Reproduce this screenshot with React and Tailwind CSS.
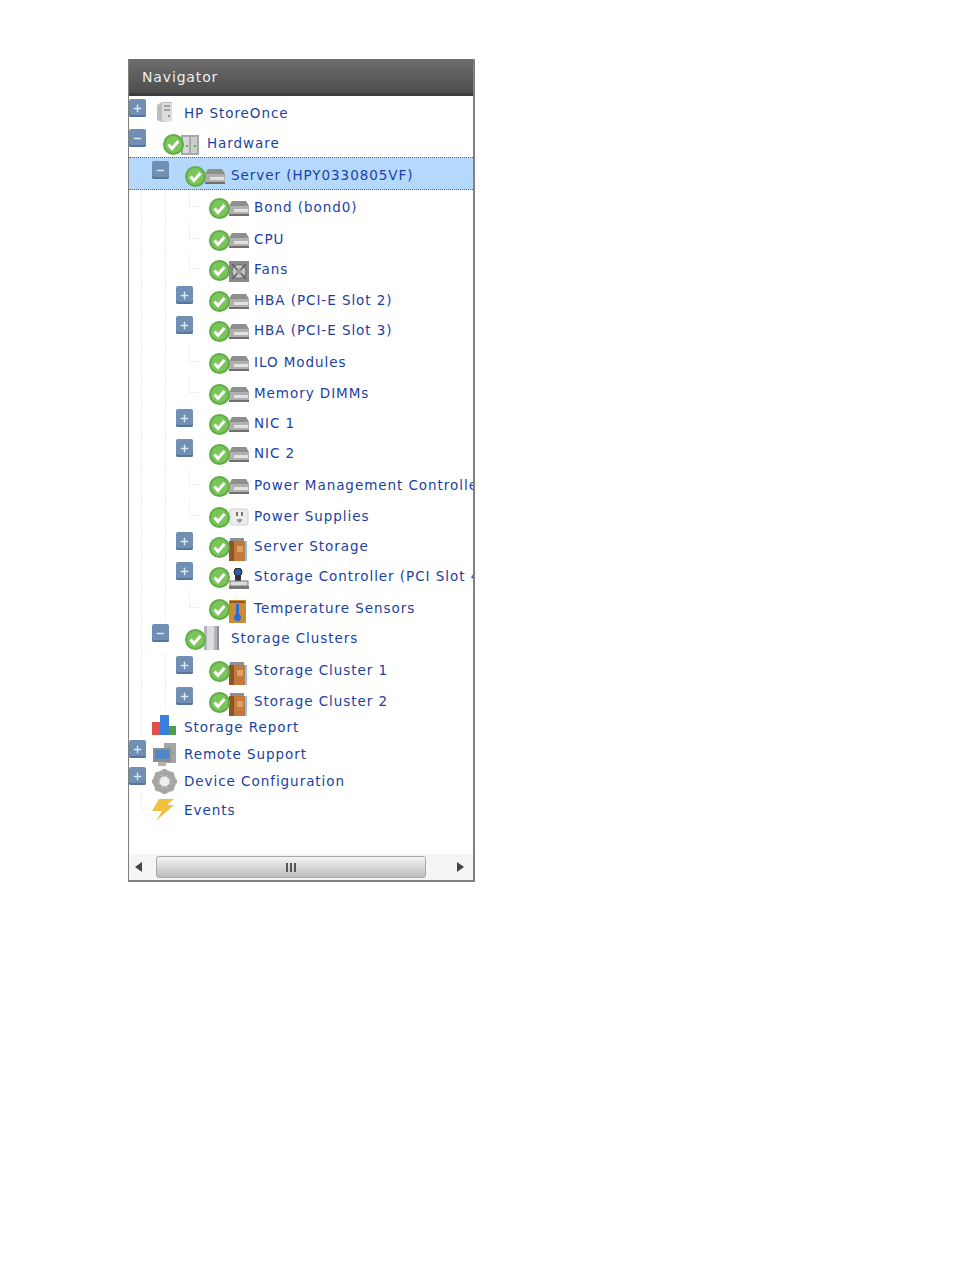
import React from 'react';
import { Plus, Minus } from 'lucide-react';

const Check = () => (
    <svg width="21" height="21" viewBox="0 0 21 21" className="relative z-10 shrink-0">
        <circle cx="10.5" cy="10.5" r="9.5" fill="#7cc45c" stroke="#5fae45" strokeWidth="2" />
        <path d="M5.5 10.5 L9 14.5 L15.5 7" fill="none" stroke="#ffffff" strokeWidth="3" />
    </svg>
);

const Disk = () => (
    <svg width="20" height="18" viewBox="0 0 20 18">
        <path d="M3 2 H17 L20 7 H0 Z" fill="#8f8f8f" />
        <rect x="0" y="7" width="20" height="9" fill="#b0b0b0" />
        <rect x="5" y="10" width="14" height="3" fill="#e2e2e2" />
        <rect x="0" y="15" width="20" height="2" fill="#6f6f6f" />
    </svg>
);

const Rack = () => (
    <svg width="20" height="20" viewBox="0 0 20 20" className="-ml-[3px]">
        <rect x="1" y="0" width="18" height="20" fill="#a8a8a8" />
        <rect x="3" y="2" width="6" height="16" fill="#d6d6d6" />
        <rect x="11" y="2" width="6" height="16" fill="#cccccc" />
        <rect x="6" y="10" width="2" height="2" fill="#5fb25a" />
        <rect x="14" y="10" width="2" height="2" fill="#5fb25a" />
    </svg>
);

const Tower = () => (
    <svg width="18" height="22" viewBox="0 0 18 22" className="ml-[2px]">
        <path d="M1 4 L6 1 H16 V20 L6 21 L1 19 Z" fill="#bdbdbd" />
        <path d="M6 2 H16 V20 H6 Z" fill="#dcdcdc" />
        <rect x="8" y="4" width="6" height="2" fill="#a0a0a0" />
        <rect x="8" y="8" width="6" height="2" fill="#a0a0a0" />
        <rect x="12" y="14" width="2" height="2" fill="#5fb25a" />
    </svg>
);

const Fan = () => (
    <svg width="20" height="22" viewBox="0 0 20 22">
        <rect x="0" y="0" width="20" height="21" fill="#8a8a8a" />
        <circle cx="10" cy="10.5" r="7" fill="#c4c4c4" stroke="#6a6a6a" />
        <path d="M3 3 L17 18 M17 3 L3 18" stroke="#5f5f5f" strokeWidth="1.5" />
        <circle cx="10" cy="10.5" r="2.5" fill="#9a9a9a" />
    </svg>
);

const Plug = () => (
    <svg width="20" height="18" viewBox="0 0 20 18">
        <rect x="1" y="1" width="18" height="16" rx="2" fill="#ececec" stroke="#cfcfcf" />
        <rect x="7" y="4" width="2" height="4" fill="#777777" />
        <rect x="12" y="4" width="2" height="4" fill="#777777" />
        <path d="M8 11 H13 V13 L10.500 15 L8 13 Z" fill="#9a9a9a" />
    </svg>
);

const Book = () => (
    <svg width="21" height="24" viewBox="0 0 21 24" className="-ml-[3px]">
        <rect x="4" y="0" width="14" height="4" fill="#8f8f8f" />
        <rect x="3" y="3" width="16" height="20" fill="#c2793a" />
        <rect x="3" y="3" width="5" height="20" fill="#8f5426" />
        <rect x="11" y="8" width="6" height="6" fill="#dba26a" />
        <rect x="19" y="3" width="2" height="20" fill="#8fc0ee" />
    </svg>
);

const Stamp = () => (
    <svg width="20" height="24" viewBox="0 0 20 24">
        <circle cx="9" cy="4" r="4" fill="#2f5f9f" stroke="#222222" />
        <rect x="6" y="7" width="6" height="7" fill="#333333" />
        <rect x="1" y="13" width="18" height="5" fill="#dcdcdc" stroke="#777777" />
        <rect x="0" y="18" width="20" height="3" fill="#777777" />
    </svg>
);

const Thermo = () => (
    <svg width="18" height="23" viewBox="0 0 18 23">
        <rect x="0" y="0" width="17" height="23" fill="#d08a30" />
        <rect x="1" y="1" width="15" height="2" fill="#8f5a1e" />
        <rect x="7" y="4" width="3" height="12" fill="#2a6fd0" />
        <circle cx="8.500" cy="17.500" r="3.500" fill="#2a6fd0" />
    </svg>
);

const Cylinder = () => (
    <svg width="18" height="25" viewBox="0 0 18 25" className="-ml-[2px] -mt-[4px]">
        <rect x="1" y="0" width="15" height="24" fill="#b4b4bc" />
        <rect x="4" y="0" width="7" height="24" fill="#dcdce2" />
        <rect x="14" y="0" width="2" height="24" fill="#8d8d95" />
    </svg>
);

const Bars = () => (
    <svg width="25" height="21" viewBox="0 0 25 21" className="-ml-[2px]">
        <rect x="0" y="7" width="8" height="13" fill="#e0504a" />
        <rect x="8" y="0" width="9" height="20" fill="#3a7fe0" />
        <rect x="17" y="11" width="7" height="9" fill="#4f9e4a" />
    </svg>
);

const Monitor = () => (
    <svg width="25" height="25" viewBox="0 0 25 25" className="-ml-[2px]">
        <rect x="12" y="1" width="12" height="20" fill="#a4a4a4" />
        <rect x="20" y="10" width="2" height="2" fill="#5fb25a" />
        <rect x="1" y="6" width="18" height="14" fill="#8e8e8e" />
        <rect x="3" y="8" width="14" height="9" fill="#4f86c6" />
        <rect x="6" y="20" width="8" height="4" fill="#b4b4b4" />
    </svg>
);

const Gear = () => (
    <svg width="25" height="25" viewBox="0 0 25 25" className="-ml-[2px]">
        <circle cx="12.500" cy="12.500" r="9" fill="none" stroke="#a6a6a6" strokeWidth="5" />
        <path d="M12.500 0 V25 M0 12.500 H25 M3.700 3.700 L21.300 21.300 M21.300 3.700 L3.700 21.300" stroke="#a6a6a6" strokeWidth="4" />
        <circle cx="12.500" cy="12.500" r="5" fill="#eeeeee" />
    </svg>
);

const Bolt = () => (
    <svg width="24" height="24" viewBox="0 0 24 24" className="-ml-[3px]">
        <path d="M8 1 H23 L16 7 H23 L5 23 L11 13 H1 Z" fill="#f0c040" />
    </svg>
);

const rows = [
    { label: 'HP StoreOnce', h: 'h-[30px]', level: 0, open: false, icon: <Tower />, plain: true },
    { label: 'Hardware', h: 'h-[32px]', level: 1, open: true, icon: <Rack />, status: true },
    { label: 'Server (HPY0330805VF)', h: 'h-[32px]', level: 2, open: true, icon: <Disk />, status: true, selected: true },
    { label: 'Bond (bond0)', h: 'h-[32px]', level: 3, icon: <Disk />, status: true, lines: 3 },
    { label: 'CPU', h: 'h-[30px]', level: 3, icon: <Disk />, status: true, lines: 3 },
    { label: 'Fans', h: 'h-[31px]', level: 3, icon: <Fan />, status: true, lines: 3 },
    { label: 'HBA (PCI-E Slot 2)', h: 'h-[30px]', level: 3, open: false, icon: <Disk />, status: true, lines: 2 },
    { label: 'HBA (PCI-E Slot 3)', h: 'h-[32px]', level: 3, open: false, icon: <Disk />, status: true, lines: 2 },
    { label: 'ILO Modules', h: 'h-[31px]', level: 3, icon: <Disk />, status: true, lines: 3 },
    { label: 'Memory DIMMs', h: 'h-[30px]', level: 3, icon: <Disk />, status: true, lines: 3 },
    { label: 'NIC 1', h: 'h-[30px]', level: 3, open: false, icon: <Disk />, status: true, lines: 2 },
    { label: 'NIC 2', h: 'h-[32px]', level: 3, open: false, icon: <Disk />, status: true, lines: 2 },
    { label: 'Power Management Controller', h: 'h-[31px]', level: 3, icon: <Disk />, status: true, lines: 3 },
    { label: 'Power Supplies', h: 'h-[30px]', level: 3, icon: <Plug />, status: true, lines: 3 },
    { label: 'Server Storage', h: 'h-[30px]', level: 3, open: false, icon: <Book />, status: true, lines: 2 },
    { label: 'Storage Controller (PCI Slot 4)', h: 'h-[32px]', level: 3, open: false, icon: <Stamp />, status: true, lines: 2 },
    { label: 'Temperature Sensors', h: 'h-[30px]', level: 3, icon: <Thermo />, status: true, lines: 3 },
    { label: 'Storage Clusters', h: 'h-[32px]', level: 2, open: true, icon: <Cylinder />, status: true, lines: 1 },
    { label: 'Storage Cluster 1', h: 'h-[31px]', level: 3, open: false, icon: <Book />, status: true, lines: 2 },
    { label: 'Storage Cluster 2', h: 'h-[26px]', level: 3, open: false, icon: <Book />, status: true, lines: 2 },
    { label: 'Storage Report', h: 'h-[27px]', level: 0, icon: <Bars />, plain: true, lines: 1 },
    { label: 'Remote Support', h: 'h-[27px]', level: 0, open: false, icon: <Monitor />, plain: true },
    { label: 'Device Configuration', h: 'h-[29px]', level: 0, open: false, icon: <Gear />, plain: true },
    { label: 'Events', h: 'h-[30px]', level: 0, icon: <Bolt />, plain: true, last: true },
];

const indent = ['pl-0', 'pl-0', 'pl-[23px]', 'pl-[47px]'];
const slot = ['w-[25px]', 'w-[34px]', 'w-[33px]', 'w-[33px]'];
const iconBox = ['w-[30px]', 'w-[44px]', 'w-[46px]', 'w-[45px]'];

function Expander({ open }) {
    const Glyph = open ? Minus : Plus;
    return (
        <div className="mt-[3px] flex h-[18px] w-[17px] items-center justify-center rounded-[2px] bg-[#6f90b4] shadow-[inset_0_-2px_0_#55769a]">
            <Glyph size={11} strokeWidth={3} className="text-[#dfe8f2]" />
        </div>
    );
}

function Guides({ lines, last }) {
    return (
        <>
            {lines >= 1 && <div className="absolute left-[12px] top-0 h-full border-l border-dotted border-[#e6e6e6]"></div>}
            {lines >= 2 && <div className="absolute left-[36px] top-0 h-full border-l border-dotted border-[#e6e6e6]"></div>}
            {lines >= 3 && <div className="absolute left-[60px] top-0 h-[17px] w-[10px] border-b border-l border-dotted border-[#e6e6e6]"></div>}
            {last && <div className="absolute left-[12px] top-0 h-[17px] w-[9px] border-b border-l border-dotted border-[#e6e6e6]"></div>}
        </>
    );
}

function Row({ row }) {
    const rowClass = row.selected
        ? '-mt-px h-[33px] border-y border-dotted border-[#3f6fa8] bg-[#b5d8fd]'
        : row.h;
    return (
        <div className={`relative flex items-start ${rowClass} ${indent[row.level]}`}>
            <Guides lines={row.lines} last={row.last} />
            <div className={`shrink-0 ${slot[row.level]}`}>
                {row.open !== undefined && <Expander open={row.open} />}
            </div>
            <div className={`flex shrink-0 items-start ${iconBox[row.level]} ${row.plain ? 'mt-[5px]' : 'mt-2'}`}>
                {row.status && <Check />}
                <div className={row.status ? '-ml-px mt-px' : ''}>{row.icon}</div>
            </div>
            <span className="whitespace-nowrap text-[13.500px] leading-[34px] tracking-[0.95px] text-[#1c3fa3]">{row.label}</span>
        </div>
    );
}

export default function App() {
    return (
        <div className="min-h-[1270px] bg-white pl-[128px] pt-[59px] font-['DejaVu_Sans',sans-serif]">
            <div className="flex h-[823px] w-[347px] flex-col overflow-hidden border-b-2 border-l border-r-2 border-[#808080]">
                <div className="flex h-[37px] shrink-0 items-center border-b-[3px] border-[#3c3c3c] bg-gradient-to-b from-[#6e6e6e] to-[#4d4d4d] pb-0 pl-[13px] pt-[2px] text-[14px] tracking-[0.85px] text-[#eeeeee]">
                    Navigator
                </div>
                <div className="flex-1 overflow-hidden">
                    {rows.map((row) => (
                        <Row key={row.label} row={row} />
                    ))}
                </div>
                <div className="flex h-[26px] shrink-0 items-center bg-[#f5f5f5]">
                    <div className="ml-[6px] h-0 w-0 border-y-[5px] border-r-[7px] border-y-transparent border-r-[#444444]"></div>
                    <div className="ml-[14px] flex h-[22px] w-[270px] items-center justify-center gap-[2px] rounded-[3px] border border-[#a8a8a8] bg-gradient-to-b from-[#f4f4f4] to-[#bcbcbc]">
                        <span className="h-[9px] w-[2px] bg-[#555555]"></span>
                        <span className="h-[9px] w-[2px] bg-[#555555]"></span>
                        <span className="h-[9px] w-[2px] bg-[#555555]"></span>
                    </div>
                    <div className="ml-[31px] h-0 w-0 border-y-[5px] border-l-[7px] border-y-transparent border-l-[#444444]"></div>
                </div>
            </div>
        </div>
    );
}
